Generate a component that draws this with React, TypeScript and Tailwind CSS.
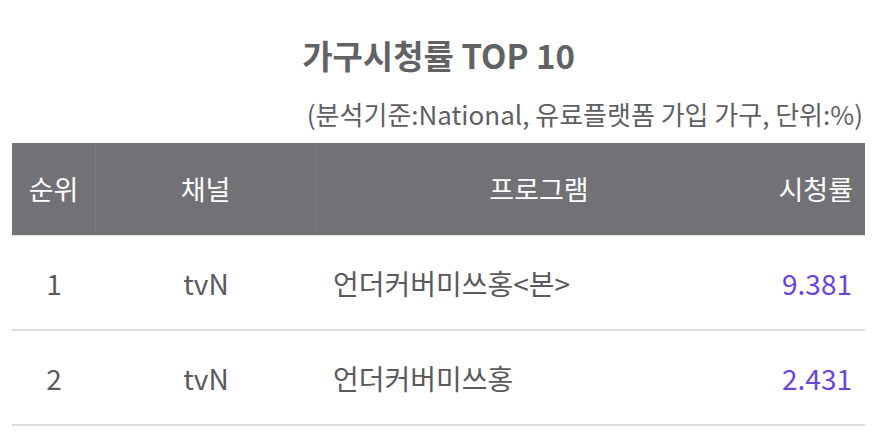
export default function App() {
  const rows = [
    { rank: 1, channel: 'tvN', program: '언더커버미쓰홍<본>', rating: '9.381' },
    { rank: 2, channel: 'tvN', program: '언더커버미쓰홍', rating: '2.431' },
  ];

  return (
    <div
      className="w-[882px] h-[432px] bg-white pl-[12px] pr-[17px] overflow-hidden"
      style={{ fontFamily: '"Noto Sans CJK KR", "Noto Sans", sans-serif' }}
    >
      {/* Title */}
      <h1 className="pt-[32px] h-[82px] text-center text-[33px] leading-[46px] font-bold text-[#626265]">
        가구시청률 TOP 10
      </h1>
      <p className="h-[61px] text-right pr-[2px] text-[26px] leading-[64px] text-[#5f5f62]">
        (분석기준:National, 유료플랫폼 가입 가구, 단위:%)
      </p>

      {/* Table */}
      <div className="grid grid-cols-[84px_220px_446px_103px] h-[93px] bg-[#727276] text-white text-[27px] border-b border-[#e4e4e4]">
        <div className="flex items-center justify-center border-r border-[#7c7c81]">순위</div>
        <div className="flex items-center justify-center border-r border-[#7c7c81]">채널</div>
        <div className="flex items-center justify-center">프로그램</div>
        <div className="flex items-center justify-end pr-[12px]">시청률</div>
      </div>

      {rows.map((r) => (
        <div
          key={r.rank}
          className="grid grid-cols-[84px_220px_446px_103px] h-[95px] border-b-2 border-[#dcdcdc] text-[28px] text-[#5a5a5d]"
        >
          <div className="flex items-center justify-center">{r.rank}</div>
          <div className="flex items-center justify-center">{r.channel}</div>
          <div className="flex items-center pl-[17px]">{r.program}</div>
          <div className="flex items-center justify-end pr-[13px] text-[#6a44dc]">{r.rating}</div>
        </div>
      ))}
    </div>
  );
}
